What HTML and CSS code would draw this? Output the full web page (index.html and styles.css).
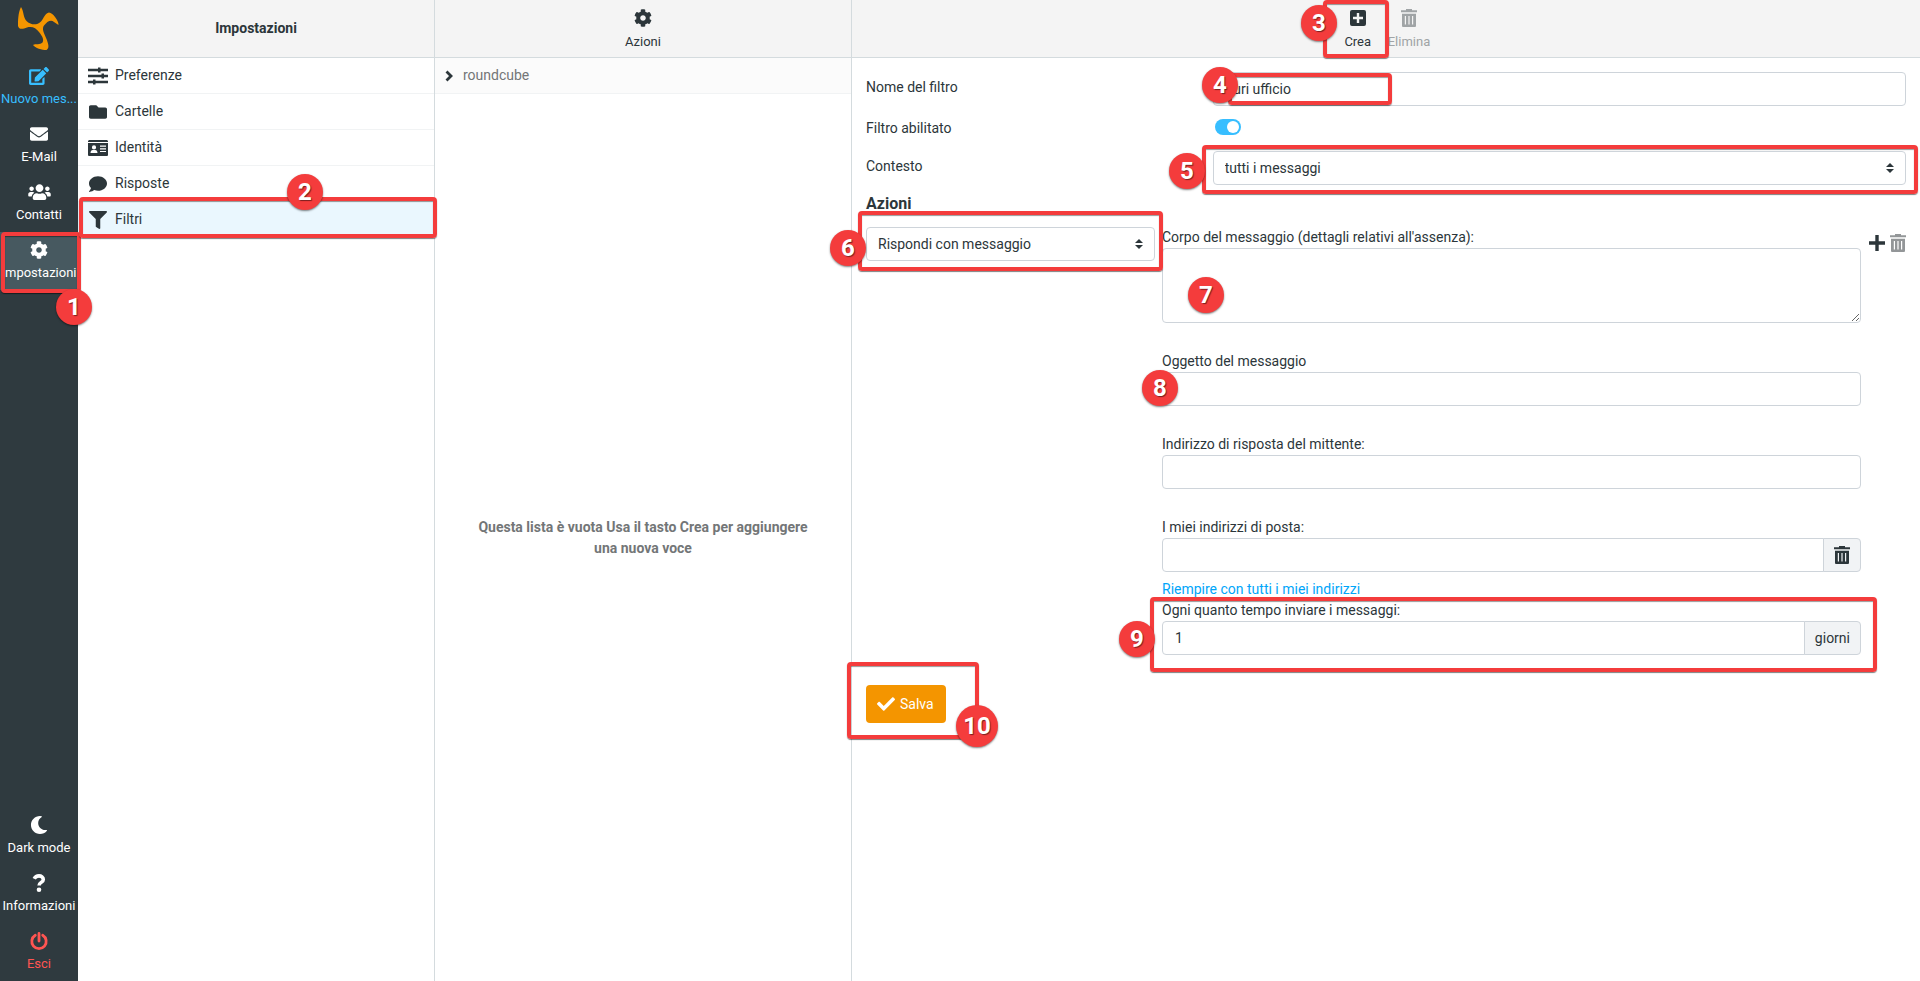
FILE: index.html
```
<!DOCTYPE html>
<html lang="it">
<head>
    <meta charset="UTF-8">
    <meta name="viewport" content="width=device-width, initial-scale=1.0">
    <title>Impostazioni - Filtri</title>
    <link rel="stylesheet" href="styles.css">
</head>
<body>
    <!-- icon sprite -->
    <svg class="sprite" aria-hidden="true">
        <symbol id="i-logo" viewBox="0 0 42 44">
            <path d="M3 0C0 6 0 14 0 19C1 23 5 22 9 20.500C14 19 18 21 21 25C25 30 26 33 24.500 35.500C22 38 18 36.500 15 38C17 41 24 43 28.500 43C32 41 30 36 28.500 32C26 26 23.500 22 26 18.500C29 14.500 33 12 36 15L40.500 18C41 14 35 6 31 5.500C27 6 26 11 23 14.500C19 18.500 13 18 9 14.500C5 11 6 4 3 0Z"/>
        </symbol>
        <symbol id="i-edit" viewBox="0 0 576 512">
            <path d="M402.600 83.200l90.200 90.200c3.800 3.800 3.800 10 0 13.800L274.400 405.600l-92.800 10.300c-12.400 1.400-22.900-9.100-21.500-21.500l10.300-92.800L388.800 83.200c3.800-3.800 10-3.800 13.800 0zm162-22.900l-48.800-48.800c-15.200-15.200-39.900-15.200-55.200 0l-35.400 35.400c-3.800 3.800-3.800 10 0 13.800l90.200 90.200c3.800 3.800 10 3.800 13.800 0l35.400-35.400c15.200-15.300 15.200-40 0-55.200zM384 346.200V448H64V128h229.800c3.200 0 6.200-1.300 8.500-3.500l40-40c7.600-7.600 2.200-20.500-8.500-20.500H48C21.500 64 0 85.500 0 112v352c0 26.500 21.500 48 48 48h352c26.500 0 48-21.500 48-48V306.200c0-10.700-12.900-16-20.500-8.500l-40 40c-2.200 2.300-3.500 5.300-3.500 8.500z"/>
        </symbol>
        <symbol id="i-mail" viewBox="0 0 512 512">
            <path d="M502.300 190.800c3.900-3.100 9.700-.2 9.700 4.700V400c0 26.500-21.500 48-48 48H48c-26.500 0-48-21.500-48-48V195.600c0-5 5.700-7.800 9.700-4.700 22.400 17.400 52.100 39.500 154.100 113.600 21.100 15.400 56.700 47.800 92.200 47.600 35.700.3 72-32.800 92.300-47.600 102-74.100 131.600-96.300 154-113.700zM256 320c23.200.4 56.600-29.200 73.400-41.400 132.700-96.300 142.800-104.700 173.400-128.700 5.800-4.500 9.200-11.500 9.200-18.900v-19c0-26.500-21.500-48-48-48H48c-26.500 0-48 21.500-48 48v19c0 7.400 3.400 14.300 9.200 18.900 30.600 23.900 40.700 32.400 173.400 128.700 16.800 12.200 50.200 41.800 73.400 41.400z"/>
        </symbol>
        <symbol id="i-users" viewBox="0 0 640 512">
            <path d="M96 224c35.300 0 64-28.700 64-64s-28.700-64-64-64-64 28.700-64 64 28.700 64 64 64zm448 0c35.300 0 64-28.700 64-64s-28.700-64-64-64-64 28.700-64 64 28.700 64 64 64zm32 32h-64c-17.600 0-33.500 7.100-45.100 18.600 40.300 22.100 68.900 62 75.100 109.400h66c17.700 0 32-14.300 32-32v-32c0-35.300-28.700-64-64-64zm-256 0c61.900 0 112-50.100 112-112S381.900 32 320 32 208 82.100 208 144s50.100 112 112 112zm76.800 32h-8.300c-20.800 10-43.900 16-68.500 16s-47.600-6-68.500-16h-8.300C179.600 288 128 339.600 128 403.200V432c0 26.500 21.500 48 48 48h288c26.500 0 48-21.500 48-48v-28.800c0-63.600-51.600-115.200-115.200-115.200zm-223.700-13.400C161.500 263.100 145.600 256 128 256H64c-35.300 0-64 28.700-64 64v32c0 17.700 14.300 32 32 32h65.900c6.300-47.400 34.900-87.300 75.200-109.400z"/>
        </symbol>
        <symbol id="i-cog" viewBox="0 0 512 512">
            <path d="M487.400 315.700l-42.600-24.600c4.300-23.200 4.300-47 0-70.200l42.600-24.600c4.900-2.800 7.100-8.600 5.500-14-11.100-35.600-30-67.800-54.700-94.600-3.800-4.100-10-5.100-14.800-2.300L380.800 110c-17.900-15.400-38.500-27.300-60.800-35.100V25.800c0-5.600-3.900-10.500-9.400-11.700-36.700-8.200-74.300-7.800-109.200 0-5.500 1.200-9.400 6.100-9.400 11.700V75c-22.200 7.900-42.800 19.800-60.800 35.100L88.700 85.500c-4.900-2.800-11-1.900-14.800 2.300-24.700 26.700-43.600 58.900-54.700 94.600-1.700 5.400.6 11.200 5.500 14L67.300 221c-4.300 23.200-4.300 47 0 70.200l-42.600 24.600c-4.900 2.800-7.100 8.600-5.500 14 11.100 35.600 30 67.800 54.700 94.600 3.800 4.100 10 5.100 14.800 2.300l42.600-24.600c17.900 15.400 38.500 27.300 60.800 35.100v49.200c0 5.600 3.900 10.500 9.400 11.700 36.700 8.200 74.300 7.800 109.200 0 5.500-1.200 9.400-6.100 9.400-11.700v-49.200c22.200-7.900 42.800-19.800 60.800-35.100l42.600 24.600c4.900 2.800 11 1.900 14.800-2.300 24.700-26.700 43.600-58.900 54.700-94.600 1.500-5.500-.7-11.300-5.600-14.100zM256 336c-44.100 0-80-35.900-80-80s35.900-80 80-80 80 35.900 80 80-35.900 80-80 80z"/>
        </symbol>
        <symbol id="i-moon" viewBox="0 0 512 512">
            <path d="M283 512c79 0 151-36 199-95 7-8.700-.6-21.400-11.500-19.300-124 23.600-238-71.600-238-197 0-72 38.600-138.600 101.500-174.400 9.700-5.500 7.200-20.200-3.800-22.200A258 258 0 0 0 283 0c-141.300 0-256 114.500-256 256 0 141.300 114.500 256 256 256z"/>
        </symbol>
        <symbol id="i-question" viewBox="0 0 18 18">
            <path d="M4.200 4.800C5.200 2.800 6.800 1.900 9 1.900c2.300 0 4.300 1.400 4.300 3.500 0 3-4.200 3-4.200 6" fill="none" stroke="currentColor" stroke-width="3.600"/>
            <circle cx="9" cy="15.700" r="2.300"/>
        </symbol>
        <symbol id="i-power" viewBox="0 0 18 18">
            <path d="M5.300 3.200a7.200 7.200 0 1 0 7.400 0M9 1.500v7.500" fill="none" stroke="currentColor" stroke-width="2.800" stroke-linecap="round"/>
        </symbol>
        <symbol id="i-sliders" viewBox="0 0 20 18">
            <path d="M0 3h20M0 9h20M0 15h20" fill="none" stroke="currentColor" stroke-width="2.400"/>
            <path d="M10 .5h2.500v5H10zM13.500 6.500H16v5h-2.500zM5 12.500h2.500v5H5z"/>
        </symbol>
        <symbol id="i-folder" viewBox="0 0 512 512">
            <path d="M464 128H272l-64-64H48C21.500 64 0 85.500 0 112v288c0 26.500 21.500 48 48 48h416c26.500 0 48-21.500 48-48V176c0-26.500-21.500-48-48-48z"/>
        </symbol>
        <symbol id="i-card" viewBox="0 0 20 16">
            <path fill-rule="evenodd" d="M1 0h18l1 1v1H0V1zM0 3h20v12q0 1-1 1H1q-1 0-1-1zM6 5.300a2.100 2.100 0 1 0 0 4.200a2.100 2.100 0 0 0 0-4.200zM2.500 13h7c0-2-1-3-2.200-3h-2.600c-1.200 0-2.200 1-2.200 3zM12 5.500v1.200h6V5.500zM12 8.200v1.200h6V8.200zM12 10.900v1.200h6v-1.200z"/>
        </symbol>
        <symbol id="i-comment" viewBox="0 0 512 512">
            <path d="M256 32C114.600 32 0 125.100 0 240c0 49.600 21.400 95 57 130.700C44.500 421.100 2.700 466 2.200 466.500c-2.200 2.300-2.800 5.700-1.500 8.700S4.800 480 8 480c66.300 0 116-31.800 140.600-51.400 32.700 12.300 69 19.400 107.400 19.400 141.400 0 256-93.100 256-208S397.400 32 256 32z"/>
        </symbol>
        <symbol id="i-filter" viewBox="0 0 512 512">
            <path d="M488 0H24C2.700 0-8 25.900 7 41L192 226V432c0 7.800 3.800 15.200 10.200 19.700l80 56C298 518.700 320 507.500 320 488V226L505 41C520 25.900 509.300 0 488 0z"/>
        </symbol>
        <symbol id="i-check" viewBox="0 0 512 512">
            <path d="M173.900 439.400l-166.400-166.400c-10-10-10-26.200 0-36.200l36.200-36.200c10-10 26.200-10 36.200 0L192 312.700 432.100 72.600c10-10 26.200-10 36.200 0l36.200 36.200c10 10 10 26.200 0 36.200l-294.400 294.400c-10 10-26.200 10-36.200 0z"/>
        </symbol>
        <symbol id="i-create" viewBox="0 0 16 16">
            <path fill-rule="evenodd" d="M2 0h12q2 0 2 2v12q0 2-2 2H2q-2 0-2-2V2q0-2 2-2zM6.800 3v3.800H3v2.400h3.800V13h2.400V9.200H13V6.800H9.200V3z"/>
        </symbol>
        <symbol id="i-trash" viewBox="0 0 16 18">
            <path fill-rule="evenodd" d="M5 0h6v1.200h5v2H0v-2h5zM1 4.800h14V17q0 1-1 1H2q-1 0-1-1zM3.800 7v8.500H5V7zM7.400 7v8.500h1.200V7zM11 7v8.500h1.200V7z"/>
        </symbol>
        <symbol id="i-plus" viewBox="0 0 16 16">
            <path d="M8 0v16M0 8h16" fill="none" stroke="currentColor" stroke-width="3.400"/>
        </symbol>
        <symbol id="i-chevron" viewBox="0 0 8 12">
            <path d="M1.500 1.500L6 6l-4.500 4.500" fill="none" stroke="currentColor" stroke-width="2.800"/>
        </symbol>
        <symbol id="i-sort" viewBox="0 0 8 10">
            <path d="M4 0l4 4H0zM0 6h8l-4 4z"/>
        </symbol>
    </svg>

    <div class="layout">
        <nav class="taskmenu">
            <a href="#" class="logo" aria-label="Home"><svg><use href="#i-logo"/></svg></a>
            <a href="#" class="task compose"><svg><use href="#i-edit"/></svg><span>Nuovo mes...</span></a>
            <a href="#" class="task"><svg><use href="#i-mail"/></svg><span>E-Mail</span></a>
            <a href="#" class="task"><svg class="wide"><use href="#i-users"/></svg><span>Contatti</span></a>
            <a href="#" class="task selected"><svg><use href="#i-cog"/></svg><span>Impostazioni</span></a>
            <div class="spacer"></div>
            <a href="#" class="task"><svg><use href="#i-moon"/></svg><span>Dark mode</span></a>
            <a href="#" class="task"><svg><use href="#i-question"/></svg><span>Informazioni</span></a>
            <a href="#" class="task logout"><svg><use href="#i-power"/></svg><span>Esci</span></a>
        </nav>

        <section class="column">
            <header class="header"><h2>Impostazioni</h2></header>
            <ul class="listing">
                <li><a href="#"><svg><use href="#i-sliders"/></svg>Preferenze</a></li>
                <li><a href="#"><svg><use href="#i-folder"/></svg>Cartelle</a></li>
                <li><a href="#"><svg><use href="#i-card"/></svg>Identità</a></li>
                <li><a href="#"><svg><use href="#i-comment"/></svg>Risposte</a></li>
                <li class="selected"><a href="#"><svg><use href="#i-filter"/></svg>Filtri</a></li>
            </ul>
        </section>

        <section class="column">
            <header class="header">
                <button type="button" class="tool"><svg><use href="#i-cog"/></svg>Azioni</button>
            </header>
            <button type="button" class="filterset"><svg><use href="#i-chevron"/></svg>roundcube</button>
            <div class="empty"><p>Questa lista è vuota Usa il tasto Crea per aggiungere una nuova voce</p></div>
        </section>

        <main class="content">
            <header class="header">
                <button type="button" class="tool"><svg class="square"><use href="#i-create"/></svg>Crea</button>
                <button type="button" class="tool" disabled><svg><use href="#i-trash"/></svg>Elimina</button>
            </header>
            <form class="form">
                <div class="rows">
                    <div class="row">
                        <label for="name">Nome del filtro</label>
                        <input class="field" type="text" id="name" value="Furi ufficio">
                    </div>
                    <div class="row toggle">
                        <label for="enabled">Filtro abilitato</label>
                        <input class="switch" type="checkbox" id="enabled" checked>
                    </div>
                    <div class="row">
                        <label for="scope">Contesto</label>
                        <div class="select">
                            <select class="field" id="scope"><option>tutti i messaggi</option></select>
                            <svg><use href="#i-sort"/></svg>
                        </div>
                    </div>
                </div>

                <h3>Azioni</h3>
                <div class="action">
                    <div class="select">
                        <select class="field" aria-label="Azione"><option>Rispondi con messaggio</option></select>
                        <svg><use href="#i-sort"/></svg>
                    </div>
                    <div class="vacation">
                        <div class="group">
                            <label for="reason">Corpo del messaggio (dettagli relativi all'assenza):</label>
                            <textarea class="field" id="reason"></textarea>
                        </div>
                        <div class="group">
                            <label for="subject">Oggetto del messaggio</label>
                            <input class="field" type="text" id="subject">
                        </div>
                        <div class="group">
                            <label for="from">Indirizzo di risposta del mittente:</label>
                            <input class="field" type="text" id="from">
                        </div>
                        <div class="group addresses">
                            <label for="addresses">I miei indirizzi di posta:</label>
                            <div class="input-group">
                                <input class="field" type="text" id="addresses">
                                <button type="button" class="addon" aria-label="Elimina"><svg><use href="#i-trash"/></svg></button>
                            </div>
                            <a href="#" class="fill">Riempire con tutti i miei indirizzi</a>
                        </div>
                        <div class="group">
                            <label for="interval">Ogni quanto tempo inviare i messaggi:</label>
                            <div class="input-group">
                                <input class="field" type="text" id="interval" value="1">
                                <span class="addon">giorni</span>
                            </div>
                        </div>
                    </div>
                    <div class="row-tools">
                        <button type="button" aria-label="Aggiungi"><svg><use href="#i-plus"/></svg></button>
                        <button type="button" aria-label="Elimina" disabled><svg><use href="#i-trash"/></svg></button>
                    </div>
                </div>

                <button type="submit" class="save"><svg><use href="#i-check"/></svg>Salva</button>
            </form>
        </main>
    </div>

    <!-- numbered steps laid over the page -->
    <div class="steps">
        <div class="mark mark-1"></div>
        <div class="mark mark-2"></div>
        <div class="mark mark-3"></div>
        <div class="mark mark-4"></div>
        <div class="mark mark-5"></div>
        <div class="mark mark-6"></div>
        <div class="mark mark-9"></div>
        <div class="mark mark-10"></div>
        <span class="step step-1">1</span>
        <span class="step step-2">2</span>
        <span class="step step-3">3</span>
        <span class="step step-4">4</span>
        <span class="step step-5">5</span>
        <span class="step step-6">6</span>
        <span class="step step-7">7</span>
        <span class="step step-8">8</span>
        <span class="step step-9">9</span>
        <span class="step step-10">10</span>
    </div>
</body>
</html>
```
FILE: styles.css
```
* {
    box-sizing: border-box;
}

body {
    margin: 0;
    font-family: Roboto, sans-serif;
    font-size: 14px;
    line-height: 21px;
    color: #2c363a;
    background: #fff;
    position: relative;
}

svg {
    fill: currentColor;
    display: block;
    flex: none;
}

.sprite {
    display: none;
}

a {
    color: inherit;
    text-decoration: none;
}

button {
    font: inherit;
    color: inherit;
    background: none;
    border: 0;
    padding: 0;
    cursor: pointer;
}

.layout {
    display: grid;
    grid-template-columns: 78px 357px 417px 1fr;
    min-height: 100vh;
}

/* left task bar */
.taskmenu {
    background: #2f3a3f;
    color: #fff;
    display: flex;
    flex-direction: column;
}

.logo {
    height: 58px;
    display: flex;
    align-items: center;
    justify-content: center;
    color: #f49500;
}

.logo svg {
    width: 42px;
    height: 44px;
}

.task {
    height: 58px;
    padding-top: 9px;
    display: flex;
    flex-direction: column;
    align-items: center;
    gap: 3px;
    font-size: 13px;
    white-space: nowrap;
}

.task svg {
    width: 20px;
    height: 18px;
}

.task svg.wide {
    width: 23px;
}

.task.compose {
    color: #37beff;
}

.task.selected {
    background: #475960;
}

.task.logout {
    color: #ff5552;
}

.spacer {
    flex: 1;
}

/* list columns */
.column {
    display: flex;
    flex-direction: column;
    border-right: 1px solid #d4dbde;
}

.header {
    height: 58px;
    background: #f4f4f4;
    border-bottom: 1px solid #d4dbde;
    display: flex;
    align-items: center;
    justify-content: center;
}

h2 {
    margin: 0;
    font-size: 14px;
    font-weight: 700;
}

.tool {
    height: 100%;
    min-width: 46px;
    padding: 9px 7px 0;
    display: flex;
    flex-direction: column;
    align-items: center;
    gap: 4px;
    font-size: 13px;
}

.tool svg {
    width: 18px;
    height: 18px;
}

.tool svg.square {
    padding: 1px;
}

.tool:disabled {
    color: #a0a4a6;
}

.listing {
    list-style: none;
    margin: 0;
    padding: 0;
}

.listing li {
    height: 36px;
    border-bottom: 1px solid #f1f3f4;
}

.listing a {
    height: 100%;
    padding-left: 10px;
    display: flex;
    align-items: center;
    gap: 7px;
}

.listing svg {
    width: 20px;
    height: 18px;
}

.listing .selected {
    background: #eaf7fe;
}

.filterset {
    height: 36px;
    padding-left: 10px;
    display: flex;
    align-items: center;
    gap: 10px;
    background: #fbfbfb;
    border-bottom: 1px solid #f1f3f4;
    color: #737677;
}

.filterset svg {
    width: 8px;
    height: 12px;
    color: #2c363a;
}

.empty {
    flex: 1;
    padding: 0 40px;
    display: flex;
    align-items: center;
    justify-content: center;
    text-align: center;
    font-weight: 700;
    color: #737677;
}

.empty p {
    margin: 0;
}

/* filter form */
.form {
    padding: 14px;
}

.rows {
    display: grid;
    gap: 12px;
    margin-bottom: 8px;
}

.row {
    display: grid;
    grid-template-columns: 1fr 2fr;
}

.row label {
    padding-top: 5px;
}

.row.toggle label {
    padding-top: 0;
}

.field {
    display: block;
    width: 100%;
    height: 34px;
    padding: 0 12px;
    font: inherit;
    color: inherit;
    background: #fff;
    border: 1px solid #ced4da;
    border-radius: 4px;
}

.select {
    display: grid;
    align-items: center;
}

.select select,
.select svg {
    grid-area: 1 / 1;
}

.select select {
    appearance: none;
    padding: 0 11px;
}

.select svg {
    width: 8px;
    height: 10px;
    margin-right: 12px;
    justify-self: end;
    pointer-events: none;
}

.switch {
    appearance: none;
    width: 26px;
    height: 16px;
    margin: 1px 2px;
    padding: 2px;
    background: #37beff;
    border-radius: 8px;
}

.switch::before {
    content: "";
    display: block;
    width: 12px;
    height: 12px;
    margin-left: auto;
    border-radius: 50%;
    background: #fff;
}

h3 {
    margin: 0;
    font-size: 16px;
    font-weight: 700;
    line-height: 21px;
}

.action {
    margin: 13px 0 2px;
    display: grid;
    grid-template-columns: 289px 1fr auto;
    align-items: start;
}

.vacation {
    margin-left: 7px;
}

.group {
    margin-bottom: 28px;
}

.group label {
    display: block;
}

textarea.field {
    height: 75px;
    resize: vertical;
}

.addresses {
    margin-bottom: 0;
}

.fill {
    display: block;
    margin-top: 7px;
    color: #00a6fa;
}

.input-group {
    display: flex;
}

.input-group .field {
    flex: 1;
    border-radius: 4px 0 0 4px;
}

.addon {
    display: flex;
    align-items: center;
    padding: 0 10px;
    margin-left: -1px;
    background: #f1f3f5;
    border: 1px solid #ced4da;
    border-radius: 0 4px 4px 0;
}

.addon svg {
    width: 16px;
    height: 18px;
}

.row-tools {
    display: flex;
    gap: 5px;
    padding: 7px 0 0 8px;
}

.row-tools svg {
    width: 16px;
    height: 18px;
}

.row-tools :disabled {
    color: #939698;
}

.save {
    display: flex;
    align-items: center;
    gap: 5px;
    height: 38px;
    padding: 0 12px 0 11px;
    background: #f49500;
    border-radius: 4px;
    color: #fff;
}

.save svg {
    width: 18px;
    height: 18px;
}

/* steps */
.mark,
.step {
    position: absolute;
    pointer-events: none;
}

.mark {
    border: 4px solid #f43c3c;
    border-radius: 4px;
    box-shadow: 0 1px 1px rgba(0, 0, 0, 0.5), inset 0 1px 1px rgba(0, 0, 0, 0.4);
}

.step {
    width: 36px;
    height: 36px;
    border-radius: 50%;
    background: #f43c3c;
    box-shadow: 0 1px 2px rgba(0, 0, 0, 0.5);
    color: #fff;
    font-size: 24px;
    font-weight: 700;
    line-height: 36px;
    text-align: center;
    text-shadow: 1px 1px 1px rgba(0, 0, 0, 0.5);
}

.mark-1 { left: 1px; top: 232px; width: 80px; height: 61px; }
.mark-2 { left: 79px; top: 197px; width: 358px; height: 41px; }
.mark-3 { left: 1323px; top: 0; width: 66px; height: 58px; }
.mark-4 { left: 1228px; top: 73px; width: 164px; height: 32px; }
.mark-5 { left: 1202px; top: 145px; width: 716px; height: 49px; }
.mark-6 { left: 858px; top: 211px; width: 305px; height: 60px; }
.mark-9 { left: 1150px; top: 597px; width: 727px; height: 75px; }
.mark-10 { left: 847px; top: 662px; width: 132px; height: 77px; }

.step-1 { left: 56px; top: 289px; }
.step-2 { left: 287px; top: 174px; }
.step-3 { left: 1301px; top: 5px; }
.step-4 { left: 1202px; top: 67px; }
.step-5 { left: 1169px; top: 153px; }
.step-6 { left: 830px; top: 230px; }
.step-7 { left: 1188px; top: 277px; }
.step-8 { left: 1142px; top: 370px; }
.step-9 { left: 1119px; top: 621px; }
.step-10 { left: 956px; top: 705px; width: 42px; height: 42px; line-height: 42px; }
```
